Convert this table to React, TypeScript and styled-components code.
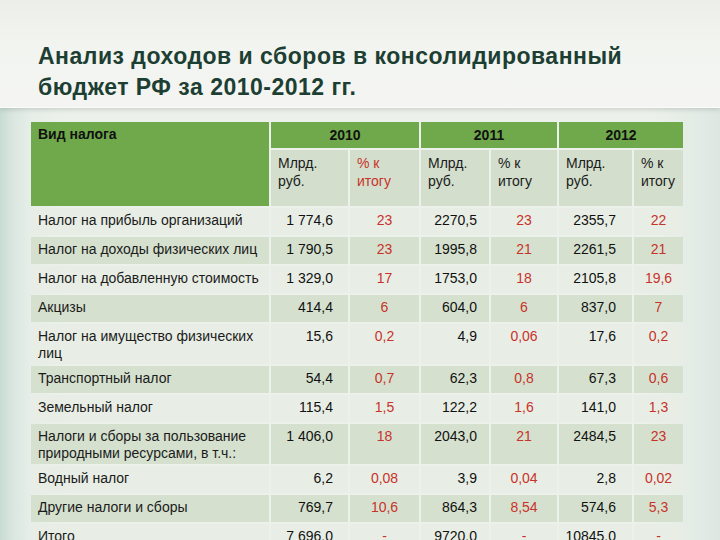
import React from "react";
import styled, { createGlobalStyle } from "styled-components";

const Global = createGlobalStyle`
  html, body { margin: 0; padding: 0; }
  body {
    width: 720px;
    height: 540px;
    overflow: hidden;
    background: #eef1ec;
    font-family: "Liberation Sans", Arial, sans-serif;
  }
`;

const Slide = styled.div`
  width: 720px;
  height: 540px;
  overflow: hidden;
  display: flex;
  flex-direction: column;
  background: linear-gradient(
    to right,
    #c8dbd3 0px,
    #d9e6df 12px,
    #e6eee8 30px,
    #edf1eb 70px,
    #edf1eb 650px,
    #e2ebe5 700px,
    #dde7e2 720px
  );
`;

const TitleBar = styled.header`
  height: 108px;
  flex: none;
  box-sizing: border-box;
  padding: 41px 0 0 38px;
  background: linear-gradient(to bottom, #eceee9 0%, #f2f4f0 40%, #f4f5f2 100%);
  border-bottom: 1px solid #fbfcfa;
  box-shadow: 0 2px 4px rgba(60, 80, 70, 0.18);
  position: relative;
  z-index: 1;
`;

const Title = styled.h1`
  margin: 0;
  font-family: "Liberation Sans", Arial, sans-serif;
  font-weight: bold;
  font-size: 23px;
  line-height: 31px;
  letter-spacing: 0.5px;
  color: #1d3f33;
`;

const TableArea = styled.main`
  padding: 12px 0 0 29px;
`;

const Table = styled.table`
  border-collapse: separate;
  border-spacing: 2px;
  table-layout: fixed;
  width: 656px;
  font-family: "Liberation Sans", Arial, sans-serif;
  font-size: 14px;
  line-height: 17px;
  color: #1b1b1b;
`;

const HeadCell = styled.th<{ $tall?: boolean }>`
  background: #6fa94b;
  color: #111;
  font-weight: bold;
  font-size: 14px;
  text-align: ${(p) => (p.$tall ? "left" : "center")};
  vertical-align: top;
  height: 26px;
  padding: ${(p) => (p.$tall ? "4px 7px 0" : "5px 0 0")};
  box-sizing: border-box;
`;

const SubHead = styled.th<{ $red?: boolean }>`
  background: #d3dfcc;
  color: ${(p) => (p.$red ? "#c8322a" : "#1b1b1b")};
  font-weight: normal;
  text-align: left;
  vertical-align: top;
  height: 56px;
  padding: 4px 7px 0;
  line-height: 18px;
  box-sizing: border-box;
`;

const Row = styled.tr<{ $dark: boolean; $tall?: boolean }>`
  & > td {
    background: ${(p) => (p.$dark ? "#d5e1ce" : "#e8eee5")};
    height: ${(p) => (p.$tall ? "40px" : "27px")};
  }
`;

const Label = styled.td`
  text-align: left;
  vertical-align: top;
  padding: 4px 7px 0;
  box-sizing: border-box;
`;

const Amount = styled.td<{ $pad: number }>`
  text-align: right;
  vertical-align: top;
  padding: 4px ${(p) => p.$pad}px 0 0;
  box-sizing: border-box;
  color: #111;
`;

const Share = styled.td`
  text-align: center;
  vertical-align: top;
  padding: 4px 0 0;
  box-sizing: border-box;
  color: #c8322a;
`;

type Item = { name: string[]; v: string[]; tall?: boolean };

const rows: Item[] = [
  { name: ["Налог на прибыль организаций"], v: ["1 774,6", "23", "2270,5", "23", "2355,7", "22"] },
  { name: ["Налог на доходы физических лиц"], v: ["1 790,5", "23", "1995,8", "21", "2261,5", "21"] },
  { name: ["Налог на добавленную стоимость"], v: ["1 329,0", "17", "1753,0", "18", "2105,8", "19,6"] },
  { name: ["Акцизы"], v: ["414,4", "6", "604,0", "6", "837,0", "7"] },
  { name: ["Налог на имущество физических", "лиц"], v: ["15,6", "0,2", "4,9", "0,06", "17,6", "0,2"], tall: true },
  { name: ["Транспортный налог"], v: ["54,4", "0,7", "62,3", "0,8", "67,3", "0,6"] },
  { name: ["Земельный налог"], v: ["115,4", "1,5", "122,2", "1,6", "141,0", "1,3"] },
  {
    name: ["Налоги и сборы за пользование", "природными ресурсами, в т.ч.:"],
    v: ["1 406,0", "18", "2043,0", "21", "2484,5", "23"],
    tall: true,
  },
  { name: ["Водный налог"], v: ["6,2", "0,08", "3,9", "0,04", "2,8", "0,02"] },
  { name: ["Другие налоги и сборы"], v: ["769,7", "10,6", "864,3", "8,54", "574,6", "5,3"] },
  { name: ["Итого"], v: ["7 696,0", "-", "9720,0", "-", "10845,0", "-"] },
];

const amountPad = [15, 12, 16];
const colWidths = [238, 77, 69, 68, 66, 73, 49];

export default function App() {
  return (
    <>
      <Global />
      <Slide>
        <TitleBar>
          <Title>
            Анализ доходов и сборов в консолидированный
            <br />
            бюджет РФ за 2010-2012 гг.
          </Title>
        </TitleBar>
        <TableArea>
          <Table>
            <colgroup>
              {colWidths.map((w, i) => (
                <col key={i} style={{ width: w }} />
              ))}
            </colgroup>
            <thead>
              <tr>
                <HeadCell $tall rowSpan={2}>
                  Вид налога
                </HeadCell>
                <HeadCell colSpan={2}>2010</HeadCell>
                <HeadCell colSpan={2}>2011</HeadCell>
                <HeadCell colSpan={2}>2012</HeadCell>
              </tr>
              <tr>
                <SubHead>
                  Млрд.
                  <br />
                  руб.
                </SubHead>
                <SubHead $red>
                  % к
                  <br />
                  итогу
                </SubHead>
                <SubHead>
                  Млрд.
                  <br />
                  руб.
                </SubHead>
                <SubHead>
                  % к
                  <br />
                  итогу
                </SubHead>
                <SubHead>
                  Млрд.
                  <br />
                  руб.
                </SubHead>
                <SubHead>
                  % к
                  <br />
                  итогу
                </SubHead>
              </tr>
            </thead>
            <tbody>
              {rows.map((r, i) => (
                <Row key={i} $dark={i % 2 === 1} $tall={r.tall}>
                  <Label>
                    {r.name.map((line, j) => (
                      <React.Fragment key={j}>
                        {j > 0 && <br />}
                        {line}
                      </React.Fragment>
                    ))}
                  </Label>
                  {r.v.map((val, j) =>
                    j % 2 === 0 ? (
                      <Amount key={j} $pad={amountPad[j / 2]}>
                        {val}
                      </Amount>
                    ) : (
                      <Share key={j}>{val}</Share>
                    )
                  )}
                </Row>
              ))}
            </tbody>
          </Table>
        </TableArea>
      </Slide>
    </>
  );
}
